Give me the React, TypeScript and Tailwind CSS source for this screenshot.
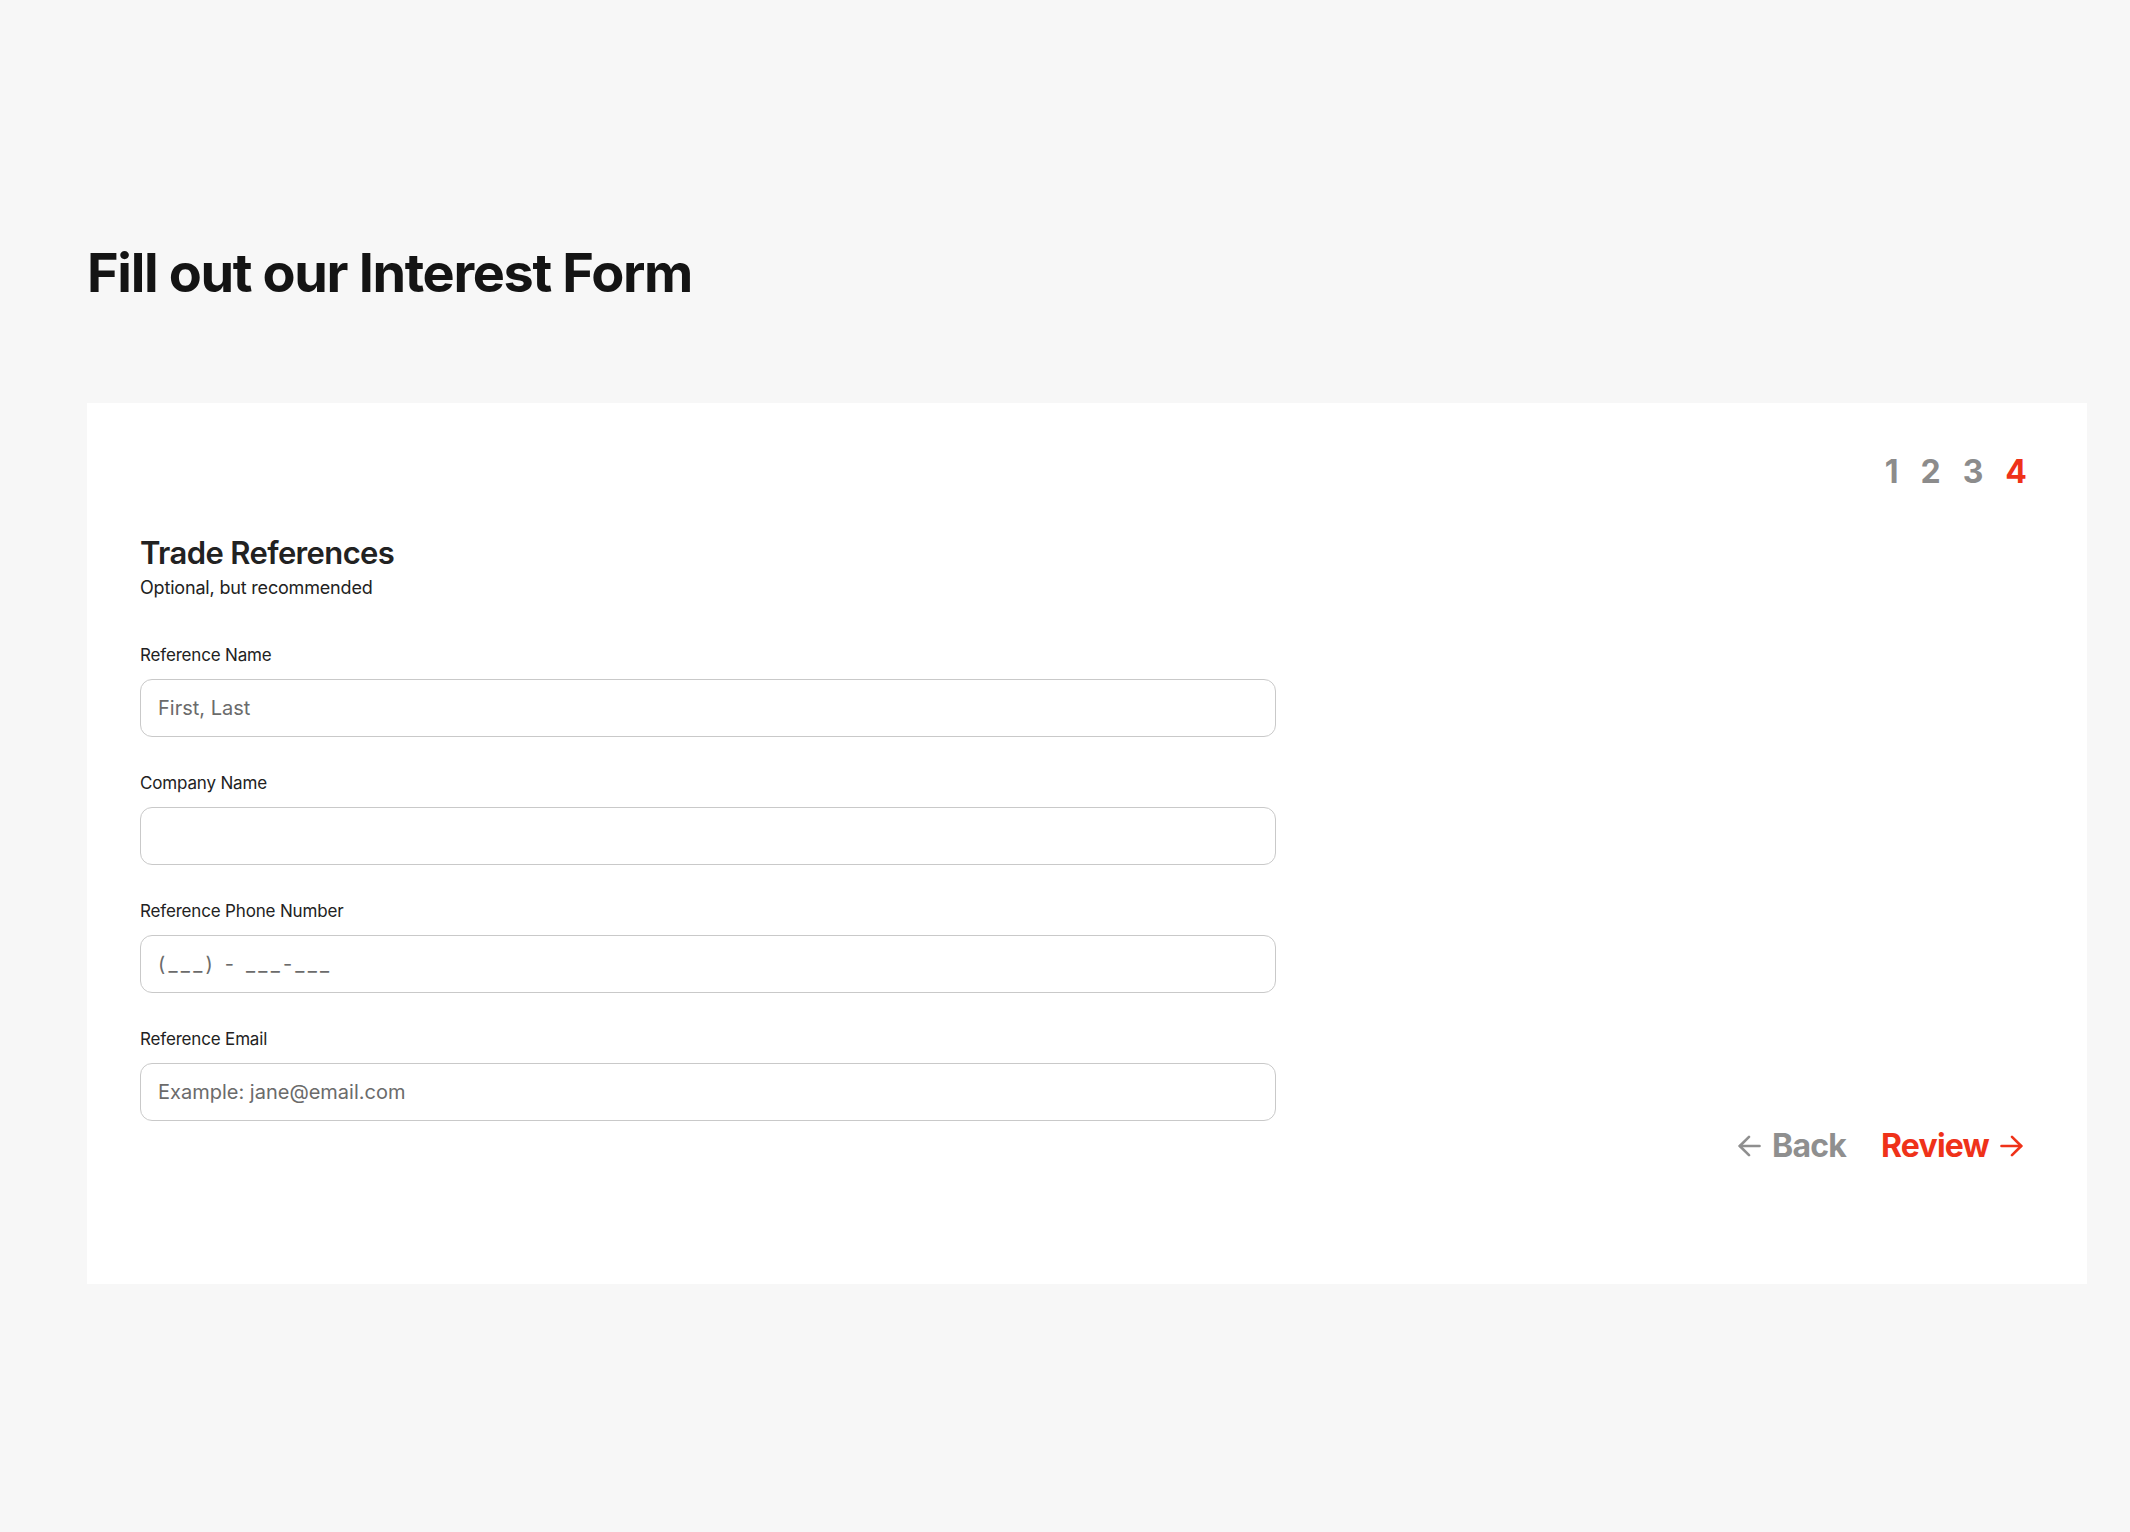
import { useState } from "react";

const fields = [
  { id: "ref-name", label: "Reference Name", placeholder: "First, Last", spaced: false },
  { id: "company", label: "Company Name", placeholder: "", spaced: false },
  { id: "phone", label: "Reference Phone Number", placeholder: "(___) - ___-___", spaced: true },
  { id: "email", label: "Reference Email", placeholder: "Example: jane@email.com", spaced: false },
];

function Arrow({ dir }: { dir: "left" | "right" }) {
  return (
    <svg
      width="23"
      height="22"
      viewBox="0 0 23 22"
      fill="none"
      stroke="currentColor"
      strokeWidth="2.6"
      strokeLinecap="round"
      strokeLinejoin="round"
      className={dir === "left" ? "" : "rotate-180"}
    >
      <path d="M21.5 11H1.8" />
      <path d="M11 1.8 1.8 11l9.2 9.2" />
    </svg>
  );
}

export default function App() {
  const [values, setValues] = useState<Record<string, string>>({});

  return (
    <div className="min-h-screen bg-[#f7f7f7] pt-[241px] pb-[200px] font-['Inter',sans-serif] text-[#1f1f1f]">
      <h1 className="ml-[87px] text-[54px] font-bold leading-[64px] tracking-[-0.025em] text-[#141414]">
        Fill out our Interest Form
      </h1>

      <div className="ml-[87px] mt-[98px] w-[2000px] bg-white pl-[53px] pr-[60px] pt-[45px] pb-[118px]">
        <div className="flex justify-end gap-[22px] text-[32px] font-bold leading-[48px] text-[#8c8c8c]">
          <span>1</span>
          <span>2</span>
          <span>3</span>
          <span className="text-[#ef3219]">4</span>
        </div>

        <div className="mt-[37px] w-[1136px]">
          <h2 className="text-[31px] font-semibold leading-[40px] tracking-[-0.02em] text-[#222]">
            Trade References
          </h2>
          <p className="mt-[3px] text-[18px] leading-[24px] tracking-[-0.01em] text-[#222]">
            Optional, but recommended
          </p>

          <div className="mt-[43px] flex flex-col gap-[34px]">
            {fields.map((f) => (
              <div key={f.id}>
                <label
                  htmlFor={f.id}
                  className="block text-[17px] leading-[24px] tracking-[-0.01em] text-[#222]"
                >
                  {f.label}
                </label>
                <input
                  id={f.id}
                  type="text"
                  value={values[f.id] ?? ""}
                  onChange={(e) => setValues({ ...values, [f.id]: e.target.value })}
                  placeholder={f.placeholder}
                  className={
                    f.spaced
                      ? "mt-[12px] block h-[58px] w-full rounded-[12px] border border-[#c9c9c9] bg-white px-[17px] text-[20px] text-[#222] outline-none placeholder:tracking-[0.16em] placeholder:text-[#6b6b6b]"
                      : "mt-[12px] block h-[58px] w-full rounded-[12px] border border-[#c9c9c9] bg-white px-[17px] text-[20px] text-[#222] outline-none placeholder:text-[#6b6b6b]"
                  }
                />
              </div>
            ))}
          </div>
        </div>

        <div className="mt-[5px] mr-[4px] flex justify-end gap-[35px] text-[32px] font-bold leading-[40px] tracking-[-0.025em]">
          <button type="button" className="flex items-center gap-[11px] text-[#8f8f8f]">
            <Arrow dir="left" />
            Back
          </button>
          <button type="button" className="flex items-center gap-[11px] text-[#ef3219]">
            Review
            <Arrow dir="right" />
          </button>
        </div>
      </div>
    </div>
  );
}
